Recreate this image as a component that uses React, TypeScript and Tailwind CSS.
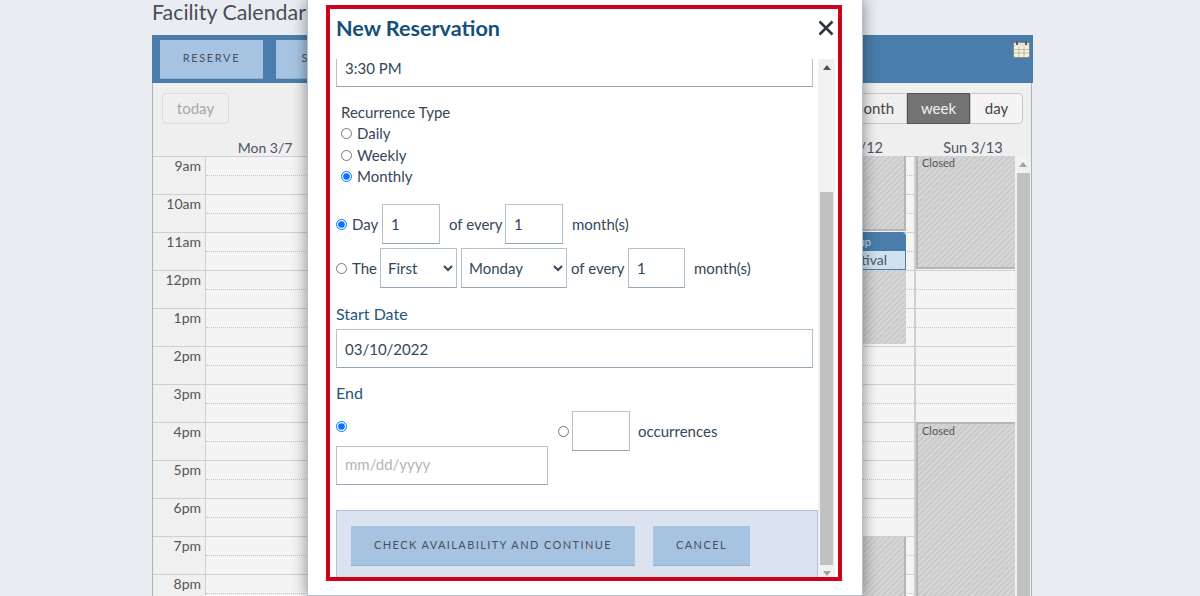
const font = "font-['Lato','Noto_Sans',sans-serif]";
const hours = ['9am','10am','11am','12pm','1pm','2pm','3pm','4pm','5pm','6pm','7pm','8pm'];
const hatch = "bg-[repeating-linear-gradient(135deg,#cbcbcb_0px,#cbcbcb_2px,#d6d6d6_2px,#d6d6d6_4px)]";
const inputCls = "border border-[#b4c2d0] border-b-[#92a3b5] bg-white px-2 text-[15px] text-[#33475b] outline-none";

function Radio({ checked = false, name }: { checked?: boolean; name: string }) {
  return <input type="radio" name={name} defaultChecked={checked} className="m-0 h-[11px] w-[11px] shrink-0" />;
}

function Calendar() {
  return (
    <div className="mx-[152px] w-[881px]">
      <h1 className="h-[35px] pt-[1px] text-[21.4px] leading-[22px] text-[#4a4f55]">Facility Calendar</h1>
      <div className="relative flex h-[48px] items-center gap-[13px] bg-[#4a7dac] pl-[8px]">
        <div className="flex h-[39px] w-[103px] items-center justify-center border-b border-[#8fb0d0] bg-[#a6c4e2] text-[11px] tracking-[1.6px] text-[#4a4f5c]">RESERVE</div>
        <div className="flex h-[39px] w-[103px] items-center justify-center border-b border-[#8fb0d0] bg-[#a6c4e2] text-[11px] tracking-[1.6px] text-[#4a4f5c]">SEARCH</div>
        <svg className="absolute right-[3px] top-[6px]" width="17" height="17" viewBox="0 0 17 17">
          <rect x="0.5" y="1.5" width="16" height="15" rx="2" fill="#f5f3e4" stroke="#8a8a80" />
          <rect x="1" y="2" width="15" height="3.5" fill="#e4e4dc" />
          <rect x="3" y="0" width="2" height="4" fill="#5a5a55" /><rect x="12" y="0" width="2" height="4" fill="#5a5a55" />
          <path d="M1 8.5h15M1 12h15M6 6v10M11 6v10" stroke="#bdbb9a" strokeWidth="1" />
        </svg>
      </div>
      <div className="mr-[1px] border-x border-[#a9b1ba] bg-[#efefef]">
        <div className="flex h-[53px] items-start justify-between pl-[9px] pr-[8px] pt-[10px]">
          <div className="flex h-[31px] w-[67px] items-center justify-center rounded-[4px] border border-[#dcdcdc] text-[15px] text-[#a6a6a6]">today</div>
          <div className="flex h-[31px] text-[15px] text-[#444]">
            <div className="flex w-[116px] items-center justify-end rounded-l-[4px] border border-[#c8c8c8] pr-[12px]">month</div>
            <div className="flex w-[63px] items-center justify-center border border-[#555] bg-[#737373] text-[#f2f2f2]">week</div>
            <div className="flex w-[53px] items-center justify-center rounded-r-[4px] border border-[#c8c8c8] bg-[#f4f4f4]">day</div>
          </div>
        </div>
        <div className="flex h-[20px] items-center pt-[3px] text-[14.5px] text-[#4c5563]">
          <div className="w-[52px]" />
          <div className="w-[120px] text-center text-[14px]">Mon 3/7</div>
          <div className="flex-1 pr-[32px] text-right">3/12</div>
          <div className="w-[116px] text-center">Sun 3/13</div>
        </div>
        <div className="relative flex">
          <div className="flex-1">
            {hours.map((h) => (
              <div key={h} className="flex h-[38px] border-t border-[#cfcfcf]">
                <div className="w-[53px] shrink-0 border-r border-[#cfcfcf] bg-[#f0f0f0] pr-[4px] text-right text-[14px] leading-[18px] text-[#555]">{h}</div>
                <div className="relative flex flex-1 bg-[#f4f4f4]">
                  <div className="mt-[18px] h-0 flex-1 border-t border-dotted border-[#c4c4c4]" />
                  <div className="w-[101px] border-l-2 border-[#cfcfcf]">
                    <div className="mt-[18px] h-0 border-t border-dotted border-[#c4c4c4]" />
                  </div>
                </div>
              </div>
            ))}
          </div>
          <div className="w-[16px] shrink-0 bg-[#f1f1f1] px-[2px]">
            <div className="mx-auto mt-[6px] h-0 w-0 border-x-[4px] border-b-[5px] border-x-transparent border-b-[#a3a3a3]" />
            <div className="mt-[6px] h-[440px] w-[13px] bg-[#c1c1c1]" />
          </div>
          <div className={`absolute left-[600px] top-0 h-[75px] w-[153px] border-b-2 border-r-2 border-[#b5b5b5] ${hatch}`} />
          <div className="absolute left-[600px] top-[76px] h-[38px] w-[153px] overflow-hidden rounded-tr-[4px] border-b border-r border-[#4a7dac] text-[14px]">
            <div className="h-[19px] bg-[#4a7dac] pr-[34px] text-right text-[11px] leading-[20px] text-[#cfe2f0]">Setup</div>
            <div className="h-[19px] bg-[#cfe2f0] pr-[18px] text-right leading-[18px] text-[#4c5563]">Festival</div>
          </div>
          <div className={`absolute left-[600px] top-[114px] h-[74px] w-[153px] ${hatch}`} />
          <div className={`absolute left-[600px] top-[381px] bottom-0 w-[153px] border-r-2 border-[#b5b5b5] ${hatch}`} />
          <div className={`absolute left-[763px] top-0 h-[113px] w-[99px] border-b-2 border-l-2 border-[#b5b5b5] pl-[4px] text-[11px] leading-[14px] text-[#555] ${hatch}`}>Closed</div>
          <div className={`absolute left-[763px] top-[266px] bottom-0 w-[99px] border-l-2 border-t-2 border-[#b5b5b5] pl-[4px] text-[11px] leading-[14px] text-[#555] ${hatch}`}>Closed</div>
        </div>
      </div>
    </div>
  );
}

function Modal() {
  return (
    <div className="absolute left-[307px] top-0 h-[596px] w-[556px] border-x border-b border-[#b4c2d0] bg-white pl-[18px] pr-[20px] pt-[5px] shadow-[0_0_14px_rgba(0,0,0,0.45)]">
      <div className="flex h-[576px] flex-col overflow-hidden border-4 border-[#d0021b]">
        <div className="flex h-[50px] shrink-0 items-center justify-between pb-[12px] pl-[6px] pr-[4px]">
          <h2 className="mt-[2px] text-[21.6px] font-bold leading-none text-[#14507a]">New Reservation</h2>
          <svg width="16" height="16" viewBox="0 0 16 16"><path d="M1.5 1.5l13 13M14.5 1.5l-13 13" stroke="#2d3540" strokeWidth="2.6" /></svg>
        </div>
        <div className="flex min-h-0 flex-1">
          <div className="w-[488px] shrink-0 pl-[6px] text-[15px] text-[#33475b]">
            <div className={`${inputCls} flex h-[28px] w-[477px] items-center border-t-0 pb-[8px]`}>3:30 PM</div>
            <div className="ml-[5px] mt-[15px] flex flex-col">
              <div className="h-[21px] leading-[21px]">Recurrence Type</div>
              <label className="flex h-[21px] items-center gap-[5px]"><Radio name="rt" />Daily</label>
              <label className="flex h-[22px] items-center gap-[5px]"><Radio name="rt" />Weekly</label>
              <label className="flex h-[21px] items-center gap-[5px]"><Radio name="rt" checked />Monthly</label>
            </div>
            <div className="mt-[17px] flex h-[40px] items-center">
              <Radio name="mode" checked /><span className="ml-[5px] w-[30px]">Day</span>
              <input defaultValue="1" className={`${inputCls} h-[40px] w-[58px]`} />
              <span className="ml-[9px] w-[56px]">of every</span>
              <input defaultValue="1" className={`${inputCls} h-[40px] w-[58px]`} />
              <span className="ml-[9px]">month(s)</span>
            </div>
            <div className="mt-[4px] flex h-[40px] items-center">
              <Radio name="mode" /><span className="ml-[5px] w-[28px]">The</span>
              <select defaultValue="First" className={`${inputCls} h-[40px] w-[77px] pl-[3px]`}><option>First</option></select>
              <select defaultValue="Monday" className={`${inputCls} ml-[4px] h-[40px] w-[106px] pl-[3px]`}><option>Monday</option></select>
              <span className="ml-[4px] w-[57px]">of every</span>
              <input defaultValue="1" className={`${inputCls} h-[40px] w-[57px]`} />
              <span className="ml-[9px]">month(s)</span>
            </div>
            <div className="mt-[16px] h-[22px] text-[16px] leading-[20px] text-[#24557a]">Start Date</div>
            <input defaultValue="03/10/2022" className={`${inputCls} mt-[3px] block h-[39px] w-[477px]`} />
            <div className="mt-[14px] h-[23px] text-[16px] leading-[22px] text-[#24557a]">End</div>
            <div className="flex">
              <div className="w-[222px]">
                <div className="flex h-[34px] items-end pb-[7px]"><Radio name="end" checked /></div>
                <input placeholder="mm/dd/yyyy" className={`${inputCls} mt-[7px] block h-[39px] w-[212px] pb-[3px] placeholder:text-[#b5b5b5]`} />
              </div>
              <div className="mt-[6px] flex h-[40px] items-center">
                <Radio name="end" /><input className={`${inputCls} ml-[3px] h-[40px] w-[58px]`} /><span className="ml-[8px]">occurrences</span>
              </div>
            </div>
            <div className="mt-[25px] flex h-[80px] w-[482px] items-start gap-[18px] border border-[#b4c2d0] bg-[#dae3ef] pl-[14px] pt-[15px] text-[11px] tracking-[1.4px] text-[#4a4f5c]">
              <div className="flex h-[40px] w-[284px] items-center justify-center border-b border-[#8fb0d0] bg-[#a6c4e2]">CHECK AVAILABILITY AND CONTINUE</div>
              <div className="flex h-[40px] w-[97px] items-center justify-center border-b border-[#8fb0d0] bg-[#a6c4e2]">CANCEL</div>
            </div>
          </div>
          <div className="flex w-[17px] shrink-0 flex-col items-center bg-[#f1f1f1]">
            <div className="mt-[6px] h-0 w-0 border-x-[4px] border-b-[5px] border-x-transparent border-b-[#555]" />
            <div className="mt-[122px] h-[373px] w-[13px] bg-[#c1c1c1]" />
            <div className="mt-[6px] h-0 w-0 border-x-[4px] border-t-[5px] border-x-transparent border-t-[#a3a3a3]" />
          </div>
        </div>
      </div>
    </div>
  );
}

export default function App() {
  return (
    <div className={`relative h-[596px] w-[1200px] overflow-hidden bg-[#e9edf2] ${font}`}>
      <Calendar />
      <Modal />
    </div>
  );
}
